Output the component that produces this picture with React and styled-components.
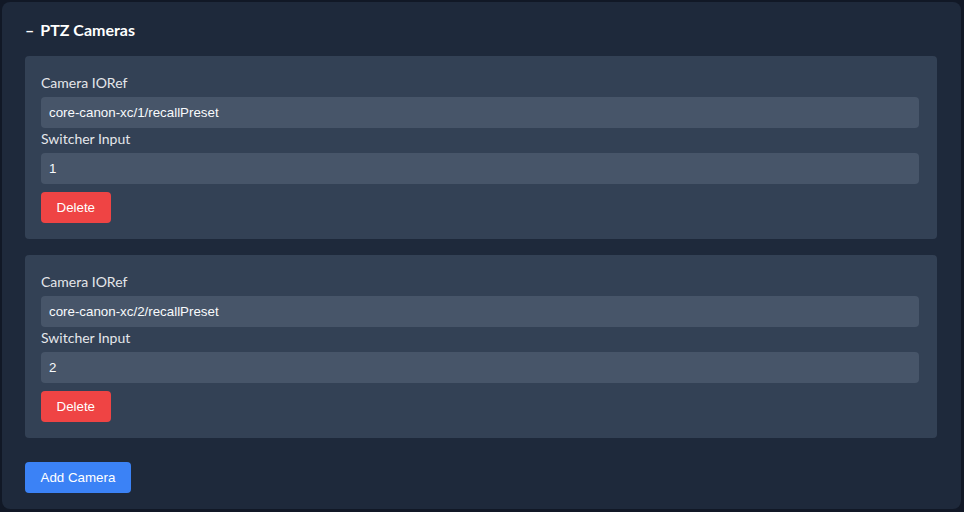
import React, { useState } from 'react'
import styled, { createGlobalStyle } from 'styled-components'

const GlobalStyle = createGlobalStyle`
  html, body {
    margin: 0;
    padding: 0;
    background: #111826;
  }
  body {
    padding: 2px 3px 3px 2px;
    font-family: Lato, "Noto Sans", sans-serif;
  }
`

const Panel = styled.section`
  background-color: #1e293b;
  border-radius: 8px;
  padding: 16px 24px 16px 23px;
  min-height: 475px;
  box-sizing: border-box;
`

const PanelTitle = styled.h3`
  margin: 0 0 14px;
  font-size: 16px;
  line-height: 24px;
  font-weight: 700;
  color: #ffffff;
  display: flex;
  gap: 6px;
`

const CameraCard = styled.div`
  background-color: #334155;
  border-radius: 4px;
  padding: 17px 18px 16px 16px;
  margin-bottom: 16px;
`

const FieldLabel = styled.label`
  display: block;
  font-size: 14px;
  line-height: 20px;
  color: #e5e7eb;
  margin: ${(p) => (p.first ? '0 0 4px' : '1px 0 4px')};
`

const FieldInput = styled.input`
  display: block;
  width: 100%;
  box-sizing: border-box;
  height: 31px;
  padding: 0 8px;
  border: none;
  border-radius: 4px;
  background-color: #475569;
  color: #f8fafc;
  font-family: "Liberation Sans", Arial, sans-serif;
  font-size: 13.33px;
  outline: none;
`

const Button = styled.button`
  height: 31px;
  padding: 0 15.5px;
  border: none;
  border-radius: 4px;
  background-color: ${(p) => (p.danger ? '#ef4444' : '#3b82f6')};
  color: #ffffff;
  font-family: "Liberation Sans", Arial, sans-serif;
  font-size: 13.33px;
  cursor: pointer;
  margin-top: 8px;
`

export default function App() {
  const [cameras] = useState([
    { ioRef: 'core-canon-xc/1/recallPreset', input: '1' },
    { ioRef: 'core-canon-xc/2/recallPreset', input: '2' },
  ])

  return (
    <>
      <GlobalStyle />
      <Panel>
        <PanelTitle>
          <span>–</span>
          <span>PTZ Cameras</span>
        </PanelTitle>
        {cameras.map((cam, i) => (
          <CameraCard key={i}>
            <FieldLabel first>Camera IORef</FieldLabel>
            <FieldInput defaultValue={cam.ioRef} />
            <FieldLabel>Switcher Input</FieldLabel>
            <FieldInput defaultValue={cam.input} />
            <Button danger>Delete</Button>
          </CameraCard>
        ))}
        <Button>Add Camera</Button>
      </Panel>
    </>
  )
}
